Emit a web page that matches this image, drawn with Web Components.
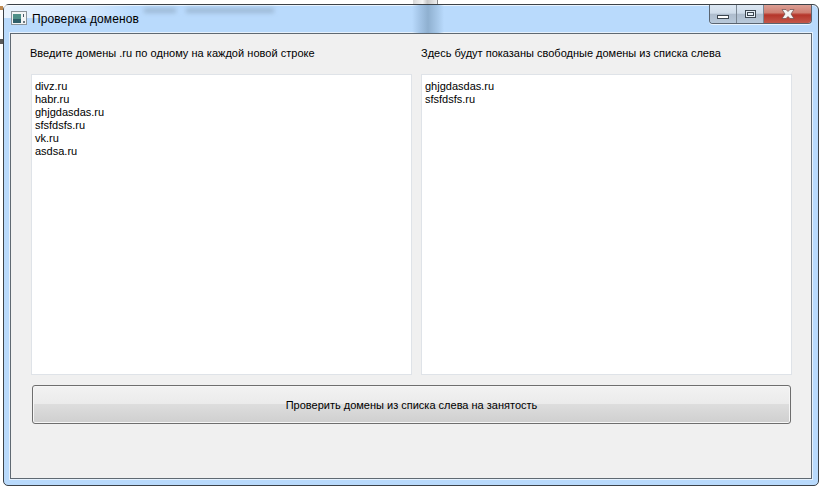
<!DOCTYPE html>
<html>
<head>
<meta charset="utf-8">
<title>Проверка доменов</title>
<style>
  html, body { margin: 0; height: 100%; background: #fff; overflow: hidden; }
  body { font: 11px "Liberation Sans", Arial, sans-serif; color: #000; }
</style>
</head>
<body>
<desktop-backdrop></desktop-backdrop>
<app-window caption="Проверка доменов">
  <domain-panel slot="left" style="--label-shift:-1px;--label-spacing:.03px" label="Введите домены .ru по одному на каждой новой строке">divz.ru
habr.ru
ghjgdasdas.ru
sfsfdsfs.ru
vk.ru
asdsa.ru</domain-panel>
  <domain-panel slot="right" label="Здесь будут показаны свободные домены из списка слева">ghjgdasdas.ru
sfsfdsfs.ru</domain-panel>
  <push-button slot="action">Проверить домены из списка слева на занятость</push-button>
</app-window>

<script>
// what is left of the page behind the window
class desktopBackdrop extends HTMLElement {
  constructor() {
    super();
    this.attachShadow({ mode: 'open' });
    this.shadowRoot.innerHTML = `
    <style>
    :host{
      position: absolute;
      inset: 0;
      overflow: hidden;
    }
    .bit{
      position: absolute;
      left: 0;
      width: 3px;
    }
    .scroll{
      position: absolute;
      left: 413px;
      top: 0;
      width: 25px;
      height: 5px;
      box-sizing: border-box;
      border-right: 1px solid #8a8a8a;
      background: linear-gradient(90deg, #d8d8d8, #f4f4f4 40%, #c8c8c8 60%, #eeeeee);
    }
    </style>
    <div class="bit" style="top:6px;height:4px;background:#c08a50"></div>
    <div class="bit" style="top:39px;height:5px;background:#5a5a5a"></div>
    <div class="scroll"></div>
    `;
  }
}

class windowButtons extends HTMLElement {
  constructor() {
    super();
    this.attachShadow({ mode: 'open' });
    this.shadowRoot.innerHTML = `
    <style>
    :host{
      display: flex;
      height: 18px;
      border: 1px solid #5a6470;
      border-top: 0;
      border-radius: 0 0 4px 4px;
      overflow: hidden;
      box-shadow: 0 1px 0 rgba(255,255,255,.7);
    }
    .btn{
      display: flex;
      align-items: center;
      justify-content: center;
      height: 100%;
      background: linear-gradient(#dce7f3 0, #cfdcea 45%, #aebccd 52%, #b9c9da 100%);
      border-right: 1px solid #7b8794;
    }
    .min{ width: 26px; }
    .max{ width: 26px; }
    .close{
      width: 47px;
      border-right: 0;
      background: linear-gradient(#dc9f94 0, #cf7f72 42%, #b5352a 55%, #c4574a 100%);
    }
    </style>
    <div class="btn min">
      <svg width="14" height="10" viewBox="0 0 14 10"><rect x="1.500" y="6.500" width="11" height="3" fill="#fff" stroke="#3c4650"/></svg>
    </div>
    <div class="btn max">
      <svg width="13" height="11" viewBox="0 0 13 11"><rect x="1.500" y="1.500" width="10" height="7" fill="#e8f0f8" stroke="#3c4650"/><rect x="3.500" y="3.500" width="6" height="3" fill="none" stroke="#3c4650"/></svg>
    </div>
    <div class="btn close">
      <svg width="14" height="10" viewBox="0 0 14 10"><path d="M1 .5h4l2 2 2-2h4L10 5l3 4.500H9l-2-2-2 2H1L4 5z" fill="#f4f4f4" stroke="#6a4a4a" stroke-width=".7"/></svg>
    </div>
    `;
  }
}

class appWindow extends HTMLElement {
  constructor() {
    super();
    this.attachShadow({ mode: 'open' });
  }
  connectedCallback() {
    this.shadowRoot.innerHTML = `
    <style>
    :host{
      position: absolute;
      left: 3px;
      top: 4px;
      width: 816px;
      height: 482px;
      box-sizing: border-box;
      display: flex;
      flex-direction: column;
      padding: 0 6px 6px;
      border: 1px solid #3c4248;
      border-radius: 6px 6px 5px 5px;
      background: #b9dafc;
      box-shadow: inset 0 1px 0 #e9f3fd;
    }
    .title{
      position: relative;
      display: flex;
      align-items: flex-start;
      height: 28px;
      flex: none;
      background: linear-gradient(90deg, transparent 0, transparent 402px, #a3c4e6 410px, #8fb0d0 418px, #a8c9ea 428px, transparent 434px, transparent 100%);
    }
    /* blurred page seen through the glass */
    .glass{
      position: absolute;
      top: 0;
      left: -6px;
      right: -6px;
      height: 13px;
      overflow: hidden;
      pointer-events: none;
      background: linear-gradient(90deg, rgba(255,255,255,.7) 0, rgba(255,255,255,.35) 90px, transparent 130px);
    }
    .glass i{
      position: absolute;
      top: 3px;
      height: 5px;
      background: #9db9d6;
      filter: blur(2px);
    }
    .icon{ margin: 6px 0 0 1px; flex: none; position: relative; }
    .caption{
      position: relative;
      margin: 7px 0 0 5px;
      font-size: 12px;
      line-height: 15px;
      letter-spacing: .1px;
      white-space: nowrap;
    }
    window-buttons{ margin-left: auto; position: relative; }
    .client{
      flex: 1;
      display: flex;
      flex-direction: column;
      border: 1px solid #5f6972;
      background: #f0f0f0;
      padding: 0 20px 0 20px;
      box-shadow: 0 0 0 1px #e6f1fc;
    }
    .panels{
      display: flex;
      gap: 9px;
    }
    ::slotted([slot="left"]){ width: 381px; }
    ::slotted([slot="right"]){ width: 371px; }
    .action{ margin-top: 10px; }
    </style>
    <div class="title">
      <div class="glass">
        <i style="left:140px;width:32px"></i>
        <i style="left:182px;width:88px"></i>
      </div>
      <svg class="icon" width="16" height="14" viewBox="0 0 16 14">
        <rect x="0.500" y="0.500" width="15" height="13" fill="#f2f4f4" stroke="#8b949a"/>
        <rect x="2" y="3" width="8" height="9" fill="#4f9088"/>
        <rect x="2" y="8" width="8" height="4" fill="#2f5f6a"/>
        <rect x="12" y="3" width="1" height="3" fill="#4a5a6a"/>
        <rect x="12" y="10" width="2" height="2" fill="#6e7880"/>
      </svg>
      <div class="caption">${this.getAttribute('caption')}</div>
      <window-buttons></window-buttons>
    </div>
    <div class="client">
      <div class="panels">
        <slot name="left"></slot>
        <slot name="right"></slot>
      </div>
      <div class="action"><slot name="action"></slot></div>
    </div>
    `;
  }
}

class domainPanel extends HTMLElement {
  constructor() {
    super();
    this.attachShadow({ mode: 'open' });
  }
  connectedCallback() {
    this.shadowRoot.innerHTML = `
    <style>
    :host{
      display: flex;
      flex-direction: column;
      flex: none;
      box-sizing: border-box;
    }
    .label{
      height: 40px;
      padding: 13px 0 0 0;
      margin-left: var(--label-shift, 0);
      box-sizing: border-box;
      line-height: 13px;
      letter-spacing: var(--label-spacing, 0);
      white-space: nowrap;
    }
    .box{
      box-sizing: border-box;
      height: 301px;
      background: #fff;
      border: 1px solid #dfe3e8;
      padding: 5px 3px;
      line-height: 13px;
      white-space: pre;
    }
    </style>
    <div class="label">${this.getAttribute('label')}</div>
    <div class="box"><slot></slot></div>
    `;
  }
}

class pushButton extends HTMLElement {
  constructor() {
    super();
    this.attachShadow({ mode: 'open' });
    this.shadowRoot.innerHTML = `
    <style>
    :host{
      display: flex;
      align-items: center;
      justify-content: center;
      box-sizing: border-box;
      width: 759px;
      height: 39px;
      margin-left: 1px;
      border: 1px solid #6e6e6e;
      border-radius: 3px;
      background: linear-gradient(#f2f2f2 0, #ebebeb 48%, #dddddd 50%, #cfcfcf 100%);
      box-shadow: inset 0 0 0 1px #f6f6f6;
    }
    </style>
    <slot></slot>
    `;
  }
}

customElements.define('desktop-backdrop', desktopBackdrop);
customElements.define('window-buttons', windowButtons);
customElements.define('app-window', appWindow);
customElements.define('domain-panel', domainPanel);
customElements.define('push-button', pushButton);
</script>
</body>
</html>
